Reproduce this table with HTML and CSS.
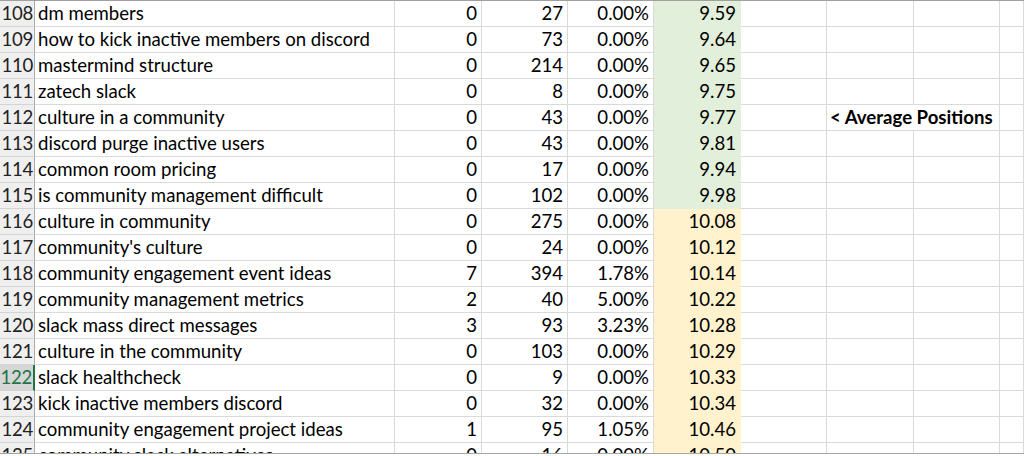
FILE: index.html
```html
<!DOCTYPE html>
<html>
<head>
<meta charset="utf-8">
<link rel="stylesheet" href="styles.css">
</head>
<body>
<div class="viewport">
  <div class="sheet">
    <div class="rh">108</div><div class="c kw">dm members</div><div class="c n">0</div><div class="c n">27</div><div class="c n">0.00%</div><div class="c n g">9.59</div><div class="c"></div><div class="c"></div><div class="c"></div><div class="c"></div>
    <div class="rh">109</div><div class="c kw">how to kick inactive members on discord</div><div class="c n">0</div><div class="c n">73</div><div class="c n">0.00%</div><div class="c n g">9.64</div><div class="c"></div><div class="c"></div><div class="c"></div><div class="c"></div>
    <div class="rh">110</div><div class="c kw">mastermind structure</div><div class="c n">0</div><div class="c n">214</div><div class="c n">0.00%</div><div class="c n g">9.65</div><div class="c"></div><div class="c"></div><div class="c"></div><div class="c"></div>
    <div class="rh">111</div><div class="c kw">zatech slack</div><div class="c n">0</div><div class="c n">8</div><div class="c n">0.00%</div><div class="c n g">9.75</div><div class="c"></div><div class="c"></div><div class="c"></div><div class="c"></div>
    <div class="rh">112</div><div class="c kw">culture in a community</div><div class="c n">0</div><div class="c n">43</div><div class="c n">0.00%</div><div class="c n g">9.77</div><div class="c"></div><div class="c note">&lt; Average Positions</div><div class="c"></div>
    <div class="rh">113</div><div class="c kw">discord purge inactive users</div><div class="c n">0</div><div class="c n">43</div><div class="c n">0.00%</div><div class="c n g">9.81</div><div class="c"></div><div class="c"></div><div class="c"></div><div class="c"></div>
    <div class="rh">114</div><div class="c kw">common room pricing</div><div class="c n">0</div><div class="c n">17</div><div class="c n">0.00%</div><div class="c n g">9.94</div><div class="c"></div><div class="c"></div><div class="c"></div><div class="c"></div>
    <div class="rh">115</div><div class="c kw">is community management difficult</div><div class="c n">0</div><div class="c n">102</div><div class="c n">0.00%</div><div class="c n g">9.98</div><div class="c"></div><div class="c"></div><div class="c"></div><div class="c"></div>
    <div class="rh">116</div><div class="c kw">culture in community</div><div class="c n">0</div><div class="c n">275</div><div class="c n">0.00%</div><div class="c n y">10.08</div><div class="c"></div><div class="c"></div><div class="c"></div><div class="c"></div>
    <div class="rh">117</div><div class="c kw">community's culture</div><div class="c n">0</div><div class="c n">24</div><div class="c n">0.00%</div><div class="c n y">10.12</div><div class="c"></div><div class="c"></div><div class="c"></div><div class="c"></div>
    <div class="rh">118</div><div class="c kw">community engagement event ideas</div><div class="c n">7</div><div class="c n">394</div><div class="c n">1.78%</div><div class="c n y">10.14</div><div class="c"></div><div class="c"></div><div class="c"></div><div class="c"></div>
    <div class="rh">119</div><div class="c kw">community management metrics</div><div class="c n">2</div><div class="c n">40</div><div class="c n">5.00%</div><div class="c n y">10.22</div><div class="c"></div><div class="c"></div><div class="c"></div><div class="c"></div>
    <div class="rh">120</div><div class="c kw">slack mass direct messages</div><div class="c n">3</div><div class="c n">93</div><div class="c n">3.23%</div><div class="c n y">10.28</div><div class="c"></div><div class="c"></div><div class="c"></div><div class="c"></div>
    <div class="rh">121</div><div class="c kw">culture in the community</div><div class="c n">0</div><div class="c n">103</div><div class="c n">0.00%</div><div class="c n y">10.29</div><div class="c"></div><div class="c"></div><div class="c"></div><div class="c"></div>
    <div class="rh sel">122</div><div class="c kw">slack healthcheck</div><div class="c n">0</div><div class="c n">9</div><div class="c n">0.00%</div><div class="c n y">10.33</div><div class="c"></div><div class="c"></div><div class="c"></div><div class="c"></div>
    <div class="rh">123</div><div class="c kw">kick inactive members discord</div><div class="c n">0</div><div class="c n">32</div><div class="c n">0.00%</div><div class="c n y">10.34</div><div class="c"></div><div class="c"></div><div class="c"></div><div class="c"></div>
    <div class="rh">124</div><div class="c kw">community engagement project ideas</div><div class="c n">1</div><div class="c n">95</div><div class="c n">1.05%</div><div class="c n y">10.46</div><div class="c"></div><div class="c"></div><div class="c"></div><div class="c"></div>
    <div class="rh">125</div><div class="c kw">community slack alternatives</div><div class="c n">0</div><div class="c n">16</div><div class="c n">0.00%</div><div class="c n y">10.50</div><div class="c"></div><div class="c"></div><div class="c"></div><div class="c"></div>
  </div>
</div>
</body>
</html>
```

FILE: styles.css
```css
html, body {
  margin: 0;
  padding: 0;
  background: #ffffff;
}

.viewport {
  height: 453px;
  overflow: hidden;
  border-bottom: 1px solid #a6a6a6;
}

.sheet {
  display: grid;
  grid-template-columns: 35px 360px 87px 86px 86px 87px 86px 87px 86px 1fr;
  grid-auto-rows: 26px;
  border-top: 1px solid #a0a0a0;
  font-family: "Lato", "Open Sans", sans-serif;
  font-size: 18.6px;
  color: #000;
}

.c, .rh {
  box-sizing: border-box;
  border-right: 1px solid #dadada;
  border-bottom: 1px solid #dadada;
  white-space: nowrap;
  display: flex;
  align-items: flex-end;
  padding: 0 3px 3px 3px;
  line-height: 20px;
  overflow: visible;
}

.rh {
  background: #efefef;
  border-right: 1px solid #ababab;
  border-bottom: 1px solid #d4d4d4;
  justify-content: flex-end;
  padding: 0 1px 3px 0;
  color: #222;
  letter-spacing: -0.3px;
}

.rh.sel {
  background: #d6d6d6;
  color: #217346;
  border-right: 2px solid #217346;
}

.kw {
  justify-content: flex-start;
  padding-left: 3px;
}

.n {
  justify-content: flex-end;
  padding-right: 4px;
}

.g {
  background: #e2efda;
  border-color: #e2efda;
}

.y {
  background: #fff2cc;
  border-color: #fff2cc;
}

.note {
  grid-column: span 2;
  font-weight: 700;
  padding-left: 3px;
}
```
